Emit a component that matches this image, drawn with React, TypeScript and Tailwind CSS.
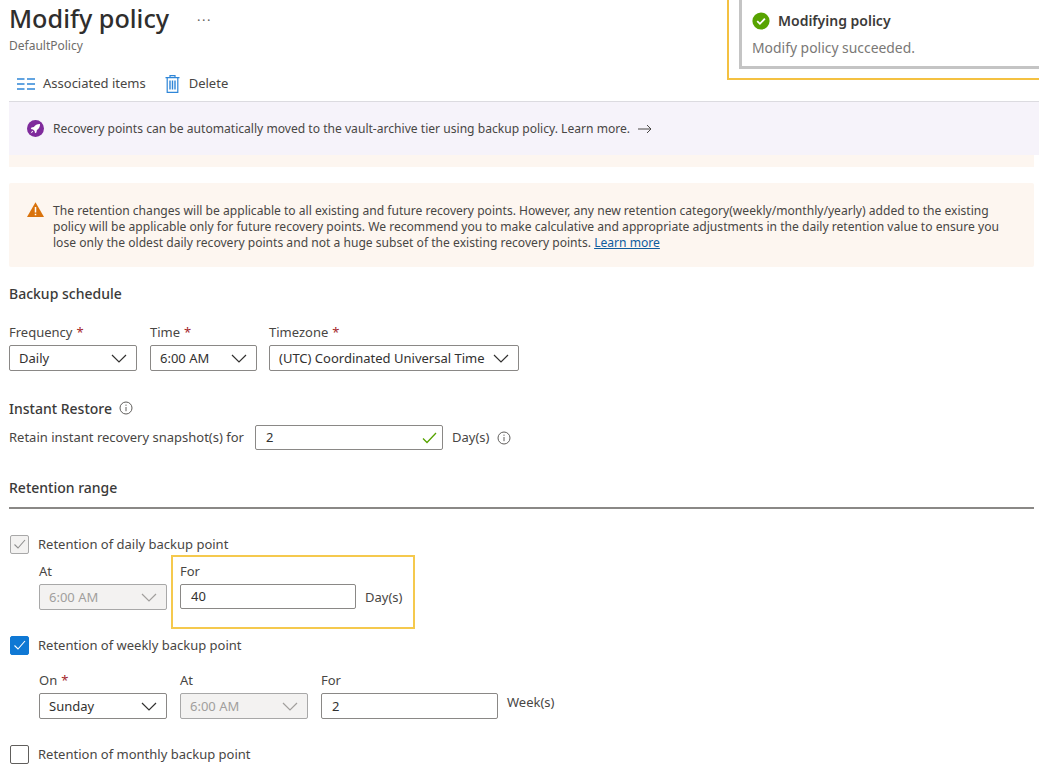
import React from "react";

const Chevron = ({ c = "#323130" }: { c?: string }) => (
  <svg width="16" height="9" viewBox="0 0 16 9" fill="none" stroke={c} strokeWidth="1.2"><path d="M1 1l7 7 7-7" /></svg>
);

const Star = () => <span className="text-[#a4262c] ml-1">*</span>;

function Select({ w, text, disabled }: { w: string; text: string; disabled?: boolean }) {
  return (
    <div className={`${w} h-[26px] flex items-center justify-between pl-[9px] pr-[9px] rounded-[2px] border ${disabled ? "bg-[#f3f2f1] border-[#a8a8a8] text-[#a19f9d]" : "bg-white border-[#8a8886] text-[#323130]"}`}>
      <span className="pt-[1px]">{text}</span>
      <Chevron c={disabled ? "#a19f9d" : "#323130"} />
    </div>
  );
}

function TextInput({ w, value, check }: { w: string; value: string; check?: boolean }) {
  return (
    <div className={`${w} h-[25px] flex items-center justify-between pl-[10px] pr-[5px] rounded-[2px] border border-[#8a8886] bg-white text-[#323130]`}>
      <span className="pt-[1px]">{value}</span>
      {check && (
        <svg width="15" height="12" viewBox="0 0 15 12" fill="none" stroke="#57a300" strokeWidth="1.3"><path d="M1 6.5l4 4 9-9.5" /></svg>
      )}
    </div>
  );
}

function Info() {
  return (
    <svg width="14" height="14" viewBox="0 0 14 14" fill="none" stroke="#605e5c" strokeWidth="1">
      <circle cx="7" cy="7" r="6" />
      <path d="M7 6v4.2M7 3.6v1.2" />
    </svg>
  );
}

function Check({ state }: { state: "disabled" | "on" | "off" }) {
  const cls =
    state === "on"
      ? "bg-[#0f78d4] border-[#0f78d4]"
      : state === "disabled"
        ? "bg-[#f3f2f1] border-[#a8a8a8]"
        : "bg-white border-[#605e5c]";
  return (
    <div className={`w-[19px] h-[19px] rounded-[2px] border flex items-center justify-center shrink-0 ${cls}`}>
      {state !== "off" && (
        <svg width="13" height="11" viewBox="0 0 13 11" fill="none" stroke={state === "on" ? "#fff" : "#8f8f8f"} strokeWidth="1.1"><path d="M1.5 5.5l3.5 3.5 7-8" /></svg>
      )}
    </div>
  );
}

export default function App() {
  return (
    <div className="relative w-[1039px] h-[781px] overflow-hidden bg-white text-[13px] text-[#484644] font-['Noto_Sans','Open_Sans',sans-serif]">
      {/* Toast */}
      <div className="absolute right-0 top-[-10px] w-[312px] h-[90px] border-b-2 border-l-2 border-[#f4c141] pl-[10px] pb-[9px] bg-white">
        <div className="h-full border-l-[3px] border-b-[3px] border-[#c4c4c4] pl-[10px] pt-[20px]">
          <div className="flex items-center gap-[8px]">
            <svg width="18" height="18" viewBox="0 0 18 18">
              <circle cx="9" cy="9" r="8.6" fill="#57a300" />
              <path d="M5.2 9.2l2.7 2.6 5-5.2" fill="none" stroke="#fff" strokeWidth="1.8" />
            </svg>
            <span className="text-[14px] font-semibold text-[#3b3a39]">Modifying policy</span>
          </div>
          <div className="mt-[7px] text-[13.9px] text-[#7a7876]">Modify policy succeeded.</div>
        </div>
      </div>

      {/* Header */}
      <div className="pl-[9px] pt-[2px]">
        <div className="flex items-center h-[33px]">
          <h1 className="text-[25.2px] font-medium text-[#2f2e2d] leading-[33px]">Modify policy</h1>
          <span className="ml-[28px] mt-[3px] text-[13px] tracking-[1.5px] text-[#605e5c] leading-none">···</span>
        </div>
        <div className="text-[12px] text-[#6e6c6a] h-[17px] mt-[2px] leading-[17px]">DefaultPolicy</div>
      </div>

      {/* Toolbar */}
      <div className="ml-[9px] h-[48px] flex items-center pl-[8px] pt-[12px] border-b border-[#dcdbe0]">
        <svg width="18" height="12" viewBox="0 0 18 12" stroke="#2f86d8" strokeWidth="1.4">
          <path d="M0 1h7.5M10 1h8M0 6h7.5M10 6h8M0 11h7.5M10 11h8" />
        </svg>
        <span className="ml-[8px]">Associated items</span>
        <svg className="ml-[19px]" width="15" height="18" viewBox="0 0 15 18" fill="none" stroke="#2f86d8" strokeWidth="1.2">
          <path d="M0.5 2.6h14M5 2.4V.7h5v1.7M2.2 2.8v14.5h10.6V2.8" />
          <path d="M5 5.5v9M7.5 5.5v9M10 5.5v9" strokeWidth="1.4" />
        </svg>
        <span className="ml-[9px]">Delete</span>
      </div>

      {/* Purple banner */}
      <div className="ml-[9px] mr-0 h-[53px] bg-[#f6f3fa] flex items-center pl-[18px] text-[12.1px]">
        <svg width="17" height="17" viewBox="0 0 17 17">
          <circle cx="8.5" cy="8.5" r="8.5" fill="#7f2a9c" />
          <path d="M13 4c-2.8-.1-4.7 1-6.1 3.1L4.5 7.6 3.8 9l2.2.4 1.6 1.6.4 2.2 1.4-.7.5-2.4C12 8.7 13.1 6.8 13 4z" fill="#fff" />
          <path d="M3.6 13.4l1.6-2.6 1 1z" fill="#fff" />
        </svg>
        <span className="ml-[9px] pt-[2px]">Recovery points can be automatically moved to the vault-archive tier using backup policy. Learn more.</span>
        <svg className="ml-[8px]" width="14" height="10" viewBox="0 0 14 10" fill="none" stroke="#484644" strokeWidth="1"><path d="M0 5h13M9 1l4 4-4 4" /></svg>
      </div>
      <div className="ml-[9px] mr-[5px] h-[12px] bg-[#fdf6f0]" />

      {/* Warning banner */}
      <div className="ml-[9px] mr-[5px] mt-[16px] h-[84px] bg-[#fdf6f0] rounded-[2px] flex pl-[18px] pt-[20px] text-[12.1px]">
        <svg className="shrink-0 -mt-[1px]" width="17" height="15" viewBox="0 0 17 15">
          <path d="M8.5 0.3L17 15H0z" fill="#d9730d" />
          <path d="M8.5 5v5.5M8.5 11.7v1.6" stroke="#fff" strokeWidth="1.5" />
        </svg>
        <div className="ml-[9px] leading-[16px] w-[950px]">
          The retention changes will be applicable to all existing and future recovery points. However, any new retention category(weekly/monthly/yearly) added to the existing policy will be applicable only for future recovery points. We recommend you to make calculative and appropriate adjustments in the daily retention value to ensure you lose only the oldest daily recovery points and not a huge subset of the existing recovery points.{" "}
          <span className="text-[#0f5c9e] underline">Learn more</span>
        </div>
      </div>

      {/* Backup schedule */}
      <div className="ml-[9px] mt-[17px] text-[14px] font-medium text-[#3b3a39] leading-[20px]">Backup schedule</div>
      <div className="ml-[9px] mt-[18px] flex gap-[13px]">
        <div>
          <div className="h-[20px] leading-[20px] mb-[3px]">Frequency<Star /></div>
          <Select w="w-[128px]" text="Daily" />
        </div>
        <div>
          <div className="h-[20px] leading-[20px] mb-[3px]">Time<Star /></div>
          <Select w="w-[107px] -mr-[1px]" text="6:00 AM" />
        </div>
        <div>
          <div className="h-[20px] leading-[20px] mb-[3px]">Timezone<Star /></div>
          <Select w="w-[250px]" text="(UTC) Coordinated Universal Time" />
        </div>
      </div>

      {/* Instant restore */}
      <div className="ml-[9px] mt-[27px] flex items-center gap-[7px] h-[20px]">
        <span className="text-[14px] font-medium text-[#3b3a39]">Instant Restore</span>
        <Info />
      </div>
      <div className="ml-[9px] mt-[7px] flex items-center h-[25px]">
        <span className="w-[246px] pt-[1px]">Retain instant recovery snapshot(s) for</span>
        <TextInput w="w-[188px]" value="2" check />
        <span className="ml-[9px] pt-[1px]">Day(s)</span>
        <span className="ml-[8px] flex"><Info /></span>
      </div>

      {/* Retention range */}
      <div className="ml-[9px] mt-[28px] h-[20px] leading-[20px] text-[14px] font-medium text-[#3b3a39]">Retention range</div>
      <div className="ml-[9px] mr-[5px] mt-[9px] h-[2px] bg-[#8a8886]" />

      {/* Daily */}
      <div className="ml-[10px] mt-[26px] flex items-center gap-[9px] h-[19px]">
        <Check state="disabled" />
        <span>Retention of daily backup point</span>
      </div>
      <div className="relative ml-[39px] h-[66px] mt-[7px]">
        <div>
          <div className="h-[20px] leading-[20px] mb-[3px]">At</div>
          <Select w="w-[128px]" text="6:00 AM" disabled />
        </div>
        <div className="absolute left-[132px] top-[-6px] w-[244px] h-[74px] border-2 border-[#f5c94d] pl-[7px] pt-[4px] pointer-events-none">
          <div className="h-[20px] leading-[20px] mb-[3px]">For</div>
          <div className="flex items-center">
            <TextInput w="w-[176px]" value="40" />
            <span className="ml-[9px] mt-[3px]">Day(s)</span>
          </div>
        </div>
      </div>

      {/* Weekly */}
      <div className="ml-[10px] mt-[9px] flex items-center gap-[9px] h-[19px]">
        <Check state="on" />
        <span>Retention of weekly backup point</span>
      </div>
      <div className="ml-[39px] mt-[15px] flex gap-[13px]">
        <div>
          <div className="h-[20px] leading-[20px] mb-[3px]">On<Star /></div>
          <Select w="w-[128px]" text="Sunday" />
        </div>
        <div>
          <div className="h-[20px] leading-[20px] mb-[3px]">At</div>
          <Select w="w-[128px]" text="6:00 AM" disabled />
        </div>
        <div>
          <div className="h-[20px] leading-[20px] mb-[3px]">For</div>
          <div className="flex">
            <TextInput w="w-[177px] !h-[26px]" value="2" />
            <span className="ml-[9px] mt-[0px]">Week(s)</span>
          </div>
        </div>
      </div>

      {/* Monthly */}
      <div className="ml-[10px] mt-[26px] flex items-center gap-[9px] h-[19px]">
        <Check state="off" />
        <span>Retention of monthly backup point</span>
      </div>
    </div>
  );
}
